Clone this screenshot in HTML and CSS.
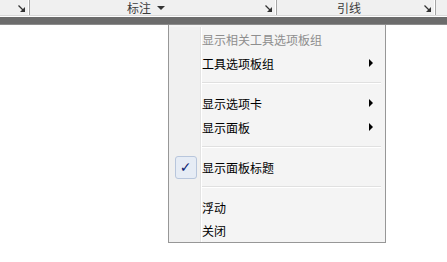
FILE: index.html
```html
<!DOCTYPE html>
<html lang="zh">
<head>
  <meta charset="UTF-8">
  <title>面板菜单</title>
  <link rel="stylesheet" href="styles.css">
</head>
<body>
  <div class="toolbar">
    <div class="cell cell-first">
      <svg class="corner" width="7" height="7" viewBox="0 0 7 7"><path d="M0.5 0.5 L5 5" stroke="#333" stroke-width="1.2"/><path d="M7 2 L7 7 L2 7 Z" fill="#333"/></svg>
    </div>
    <div class="cell cell-mark">
      <span class="label">标注 <span class="drop"></span></span>
      <svg class="corner" width="7" height="7" viewBox="0 0 7 7"><path d="M0.5 0.5 L5 5" stroke="#333" stroke-width="1.2"/><path d="M7 2 L7 7 L2 7 Z" fill="#333"/></svg>
    </div>
    <div class="cell cell-lead">
      <span class="label">引线</span>
      <svg class="corner" width="7" height="7" viewBox="0 0 7 7"><path d="M0.5 0.5 L5 5" stroke="#333" stroke-width="1.2"/><path d="M7 2 L7 7 L2 7 Z" fill="#333"/></svg>
    </div>
    <div class="cell cell-rest"></div>
  </div>
  <div class="band"></div>

  <div class="menu">
    <div class="item disabled"><span class="gutter"></span><span class="text">显示相关工具选项板组</span></div>
    <div class="item"><span class="gutter"></span><span class="text">工具选项板组</span><span class="sub"></span></div>
    <div class="sep"><span class="gutter"></span><span class="line"></span></div>
    <div class="item"><span class="gutter"></span><span class="text">显示选项卡</span><span class="sub"></span></div>
    <div class="item"><span class="gutter"></span><span class="text">显示面板</span><span class="sub"></span></div>
    <div class="sep"><span class="gutter"></span><span class="line"></span></div>
    <div class="item"><span class="gutter"><span class="check">✓</span></span><span class="text">显示面板标题</span></div>
    <div class="sep"><span class="gutter"></span><span class="line"></span></div>
    <div class="item"><span class="gutter"></span><span class="text">浮动</span></div>
    <div class="item last"><span class="gutter"></span><span class="text">关闭</span></div>
  </div>
</body>
</html>
```

FILE: styles.css
```css
body {
  margin: 0;
  background-color: #fff;
  font-family: "Noto Sans CJK SC", "Liberation Sans", sans-serif;
  font-size: 12px;
  color: #000;
}
.toolbar {
  display: flex;
  height: 15px;
  background-color: #f0f0f0;
  border-bottom: 1px solid #d9d9d9;
}
.cell {
  position: relative;
  display: flex;
  align-items: center;
  justify-content: center;
  border-right: 1px solid #a6a6a6;
  box-shadow: inset -1px 0 0 #fff;
}
.cell-first {
  width: 29px;
}
.cell-mark {
  width: 247px;
  padding-right: 14px;
  box-sizing: border-box;
}
.cell-lead {
  width: 159px;
  padding-right: 14px;
  box-sizing: border-box;
}
.cell-rest {
  flex: 1;
  border-right: none;
  box-shadow: none;
}
.label {
  color: #3c3c3c;
  line-height: 15px;
  display: flex;
  align-items: center;
}
.drop {
  display: inline-block;
  margin-left: 6px;
  border-left: 4px solid transparent;
  border-right: 4px solid transparent;
  border-top: 4px solid #333;
}
.corner {
  position: absolute;
  right: 4px;
  top: 5px;
}
.band {
  height: 7px;
  margin-top: 1px;
  background-color: #6c6c6c;
  border-bottom: 1px solid #8c8c8c;
}
.menu {
  margin-left: 168px;
  width: 216px;
  padding: 2px 0 0;
  background-color: #f4f4f4;
  border: 1px solid #979797;
  border-top: none;
}
.item, .sep {
  display: flex;
  align-items: center;
}
.item {
  height: 24px;
}
.item.last {
  height: 23px;
}
.sep {
  height: 16px;
}
.gutter {
  align-self: stretch;
  width: 31px;
  margin-right: 1px;
  background-color: #f0f0f0;
  border-right: 1px solid #e3e3e3;
  box-shadow: 1px 0 0 #fff;
  display: flex;
  align-items: center;
  justify-content: center;
}
.text {
  flex: 1;
}
.disabled .text {
  color: #8e8e8e;
}
.sub {
  width: 0;
  height: 0;
  margin-right: 12px;
  border-top: 4px solid transparent;
  border-bottom: 4px solid transparent;
  border-left: 4px solid #000;
}
.line {
  flex: 1;
  margin-right: 4px;
  height: 1px;
  background-color: #e0e0e0;
  border-bottom: 1px solid #fff;
}
.check {
  width: 20px;
  height: 21px;
  margin-left: 2px;
  border: 1px solid #b8c6dc;
  border-radius: 3px;
  background-color: #e6ecf5;
  color: #0c1f73;
  font-family: "DejaVu Sans", sans-serif;
  font-size: 14px;
  display: flex;
  align-items: center;
  justify-content: center;
}
```
